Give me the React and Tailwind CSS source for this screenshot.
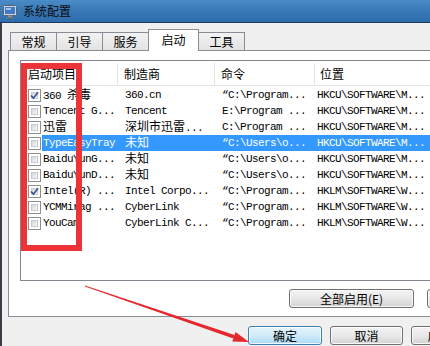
import React from "react";

const CJK = /([\u4e00-\u9fff\u3000-\u303f]+)/;

function Mixed({ t }) {
  return t.split(CJK).map((s, i) =>
    CJK.test(s) && /[\u4e00-\u9fff]/.test(s) ? (
      <span key={i} className="text-[12px] tracking-normal font-['Noto_Sans_CJK_SC',sans-serif]">
        {s}
      </span>
    ) : (
      <span key={i}>{s}</span>
    )
  );
}

function Checkbox({ checked }) {
  return (
    <div className="relative w-[13px] h-[13px] border border-[#8e8f8f] bg-white p-[2px] shrink-0">
      <div className="w-full h-full border border-[#c9ccd1] bg-gradient-to-br from-[#d3d6db] to-[#f9f9f9]" />
      {checked && (
        <svg className="absolute left-0 top-0" width="11" height="11" viewBox="0 0 11 11">
          <path d="M2 5.5 L4.5 8.2 L9 2.2" fill="none" stroke="#3d5c94" strokeWidth="1.8" />
        </svg>
      )}
    </div>
  );
}

const rows = [
  { c: true, n: "360 杀毒", m: "360.cn", cmd: "“C:\\Program...", loc: "HKCU\\SOFTWARE\\M..." },
  { c: false, n: "Tencent G...", m: "Tencent", cmd: "E:\\Program ...", loc: "HKCU\\SOFTWARE\\M..." },
  { c: false, n: "迅雷", m: "深圳市迅雷...", cmd: "C:\\Program ...", loc: "HKCU\\SOFTWARE\\M..." },
  { c: false, n: "TypeEasyTray", m: "未知", cmd: "“C:\\Users\\o...", loc: "HKCU\\SOFTWARE\\M...", sel: true },
  { c: false, n: "BaiduYunG...", m: "未知", cmd: "“C:\\Users\\o...", loc: "HKCU\\SOFTWARE\\M..." },
  { c: false, n: "BaiduYunD...", m: "未知", cmd: "“C:\\Users\\o...", loc: "HKCU\\SOFTWARE\\M..." },
  { c: true, n: "Intel(R) ...", m: "Intel Corpo...", cmd: "“C:\\Program...", loc: "HKLM\\SOFTWARE\\W..." },
  { c: false, n: "YCMMirag ...", m: "CyberLink", cmd: "“C:\\Program...", loc: "HKLM\\SOFTWARE\\W..." },
  { c: false, n: "YouCam", m: "CyberLink C...", cmd: "“C:\\Program...", loc: "HKLM\\SOFTWARE\\W..." },
];

function Btn({ children, def, w }) {
  return (
    <div
      className={`${w} h-[19px] shrink-0 rounded-[3px] border flex items-center justify-center text-[12px] text-black shadow-[inset_0_0_0_1px_rgba(255,255,255,0.8)] ${
        def
          ? "border-[#3c7fb1] bg-gradient-to-b from-[#e5f4fc] via-[#d1ebf9] to-[#a9dbf6]"
          : "border-[#707070] bg-gradient-to-b from-[#f3f3f3] via-[#e8e8e8] to-[#d3d3d3]"
      }`}
    >
      {children}
    </div>
  );
}

function Tab({ label, sel }) {
  return sel ? (
    <div className="relative z-10 -mb-px w-[51px] h-[22px] bg-white border border-b-0 border-[#898c95] flex items-center justify-center text-[12px] pb-[2px]">
      {label}
    </div>
  ) : (
    <div className="w-[47px] h-[18px] -ml-px first:ml-0 bg-gradient-to-b from-[#f2f2f2] to-[#e3e3e3] border border-b-0 border-[#898c95] flex items-center justify-center text-[12px]">
      {label}
    </div>
  );
}

export default function App() {
  return (
    <div className="relative w-[430px] h-[346px] overflow-hidden bg-[#f0f0f0] font-['Noto_Sans_CJK_SC',sans-serif] text-black">
      {/* title bar */}
      <div className="h-[22px] bg-gradient-to-b from-[#4b8bc6] via-[#3878b7] to-[#2d6dad] flex items-center pl-[3px]">
        <svg width="15" height="15" viewBox="0 0 15 15" className="shrink-0">
          <rect x="0.5" y="1.5" width="13" height="10" rx="1" fill="#cfd6de" stroke="#5a6470" />
          <rect x="2" y="3" width="10" height="7" fill="#3f78c4" />
          <rect x="3" y="4" width="5" height="2" fill="#9cc4ee" />
          <rect x="5" y="11.5" width="4" height="2" fill="#8a939c" />
          <rect x="3" y="13" width="8" height="1.5" fill="#6c757e" />
        </svg>
        <span className="ml-[5px] text-[12px] leading-none text-[#0b0b0b]">系统配置</span>
      </div>
      <div className="h-px bg-[#1b3a5c]" />

      <div className="flex">
        <div className="w-[2px] h-[330px] bg-[#3a3f47] shrink-0" />
        <div className="ml-[6px] flex flex-col">
          {/* tabs */}
          <div className="h-[27px] flex items-end pl-[2px]">
            <Tab label="常规" />
            <Tab label="引导" />
            <Tab label="服务" />
            <div className="-ml-px">
              <Tab label="启动" sel />
            </div>
            <div className="-ml-px">
              <Tab label="工具" />
            </div>
          </div>
          {/* panel */}
          <div className="w-[440px] h-[267px] bg-white border border-[#898c95] pt-[9px] pl-[11px]">
            <div className="w-[430px] h-[221px] border border-[#828790] bg-white">
              {/* header */}
              <div className="h-[25px] flex border-b border-[#e5e5e5] text-[12px] pt-[2px]">
                <div className="w-[97px] border-r border-[#e5e5e5] pl-[7px] flex items-center">启动项目</div>
                <div className="w-[97px] border-r border-[#e5e5e5] pl-[6px] flex items-center">制造商</div>
                <div className="w-[100px] border-r border-[#e5e5e5] pl-[6px] flex items-center">命令</div>
                <div className="flex-1 pl-[5px] flex items-center">位置</div>
              </div>
              <div className="pt-px font-['Liberation_Mono','Noto_Sans_CJK_SC',monospace] text-[11px] tracking-[-0.6px] whitespace-pre">
                {rows.map((r, i) => (
                  <div key={i} className="flex h-[16px] items-center">
                    <div className="w-[21px] pl-[7px] flex items-center shrink-0">
                      <Checkbox checked={r.c} />
                    </div>
                    <div className={`flex flex-1 h-full items-center ${r.sel ? "bg-[#3399ff] text-white" : ""}`}>
                      <div className="w-[76px] pl-px overflow-hidden">
                        <Mixed t={r.n} />
                      </div>
                      <div className="w-[97px] pl-[7px] overflow-hidden">
                        <Mixed t={r.m} />
                      </div>
                      <div className="w-[100px] pl-[7px] overflow-hidden">{r.cmd}</div>
                      <div className="flex-1 pl-[2px] overflow-hidden">{r.loc}</div>
                    </div>
                  </div>
                ))}
              </div>
            </div>
            <div className="mt-[8px] flex gap-[13px] ml-[269px]">
              <Btn w="w-[125px]">全部启用(E)</Btn>
              <Btn w="w-[125px]">全部禁用(D)</Btn>
            </div>
          </div>
          {/* bottom buttons */}
          <div className="mt-[9px] flex gap-[8px] ml-[240px]">
            <Btn def w="w-[74px]">确定</Btn>
            <Btn w="w-[73px]">取消</Btn>
            <Btn w="w-[73px]">应用(A)</Btn>
          </div>
        </div>
      </div>

      {/* red annotation box */}
      <div className="absolute left-[21px] top-[63px] w-[61px] h-[188px] border-[6px] border-[#ec3338]" />
      {/* red arrow */}
      <svg className="absolute left-0 top-0" width="430" height="346" viewBox="0 0 430 346">
        <polygon points="85,285.6 234.5,335.1 233.3,338.5 85,286.4" fill="#e4282e" />
        <polygon points="249,342 235.5,332.1 232.3,341.5" fill="#e4282e" />
      </svg>
    </div>
  );
}
